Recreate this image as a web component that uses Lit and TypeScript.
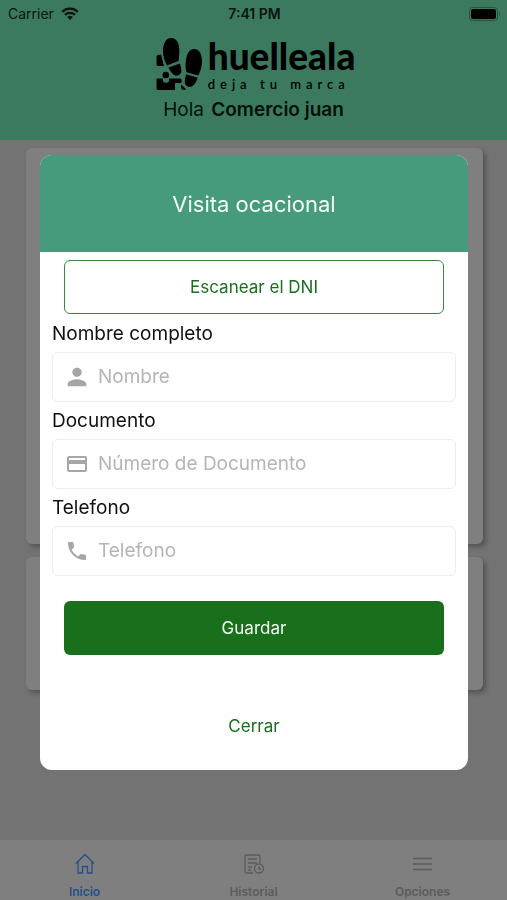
import { LitElement, html, css, svg } from "lit";
import { customElement, state } from "lit/decorators.js";

const personIcon = svg`<path d="M12 12c2.21 0 4-1.79 4-4s-1.79-4-4-4-4 1.790-4 4 1.790 4 4 4zm0 2c-2.670 0-8 1.340-8 4v2h16v-2c0-2.660-5.330-4-8-4z"/>`;
const cardIcon = svg`<path d="M20 4H4c-1.110 0-1.990.890-1.990 2L2 18c0 1.110.890 2 2 2h16c1.110 0 2-.890 2-2V6c0-1.110-.890-2-2-2zm0 14H4v-6h16v6zm0-10H4V6h16v2z"/>`;
const phoneIcon = svg`<path d="M6.620 10.790c1.440 2.830 3.760 5.140 6.590 6.590l2.200-2.200c.270-.270.670-.360 1.020-.240 1.120.370 2.330.570 3.570.570.550 0 1 .450 1 1V20c0 .550-.450 1-1 1-9.390 0-17-7.610-17-17 0-.550.450-1 1-1h3.500c.550 0 1 .450 1 1 0 1.250.200 2.450.570 3.570.110.350.030.740-.250 1.020l-2.200 2.200z"/>`;

const fields = [
  { id: "nombre", label: "Nombre completo", hint: "Nombre", type: "text", size: 28, icon: personIcon },
  { id: "documento", label: "Documento", hint: "Número de Documento", type: "text", size: 24, icon: cardIcon },
  { id: "telefono", label: "Telefono", hint: "Telefono", type: "tel", size: 24, icon: phoneIcon },
];

const tabs = [
  {
    id: "inicio",
    label: "Inicio",
    icon: svg`<path d="M2 10.500 11 1.500l9 9M4 9v11h4.500v-6.500h5V20H18V9"/>`,
  },
  {
    id: "historial",
    label: "Historial",
    icon: svg`<path d="M10 20H3.500A1.500 1.500 0 0 1 2 18.500v-15A1.500 1.500 0 0 1 3.500 2h12A1.500 1.500 0 0 1 17 3.500V10M5 6h9M5 10h9M5 14h4M5 17h3"/><circle cx="16" cy="15.500" r="4.500"/><path d="M16 13v3h2"/>`,
  },
  { id: "opciones", label: "Opciones", icon: svg`<path d="M1 5.500h19M1 11h19M1 16.500h19"/>` },
];

@customElement("app-field")
class AppField extends LitElement {
  static properties = { field: { attribute: false } };
  declare field: (typeof fields)[number];

  static styles = css`
    :host { display: block; }
    .label { display: block; color: #111; font-size: 19px; line-height: 28px; }
    .box {
      display: flex;
      align-items: center;
      gap: 9px;
      height: 48px;
      margin: 4px 0;
      padding: 0 12px;
      border: 1px solid #ececec;
      border-radius: 6px;
    }
    .slot { display: flex; flex: none; justify-content: center; width: 24px; }
    .icon { flex: none; fill: #a6a6a6; }
    .input {
      flex: 1;
      min-width: 0;
      padding: 0;
      border: 0;
      outline: 0;
      background: transparent;
      color: #111;
      font: inherit;
      font-size: 19px;
      line-height: 28px;
    }
    .input::placeholder { color: #b5b5b5; opacity: 1; }
  `;

  render() {
    const f = this.field;
    return html`
      <label class="label" for=${f.id}>${f.label}</label>
      <div class="box">
        <span class="slot">
          <svg class="icon" width=${f.size} height=${f.size} viewBox="0 0 24 24" aria-hidden="true">${f.icon}</svg>
        </span>
        <input class="input" id=${f.id} type=${f.type} placeholder=${f.hint} />
      </div>
    `;
  }
}

@customElement("app-root")
class AppRoot extends LitElement {
  @state() private tab = "inicio";

  static styles = css`
    :host {
      display: flex;
      flex-direction: column;
      min-height: 100vh;
      background: #737373;
      font-family: Inter, "Liberation Sans", sans-serif;
    }
    .header { height: 140px; background: #3c7a60; color: #000; }
    .status {
      display: grid;
      grid-template-columns: 1fr auto 1fr;
      align-items: center;
      height: 27px;
      padding: 0 6px 0 8px;
      color: #06150f;
      font-size: 14px;
    }
    .carrier { display: flex; align-items: center; gap: 7px; }
    .time { font-weight: 600; }
    .battery { justify-self: end; }
    .logo { display: flex; justify-content: center; gap: 4px; padding: 10px 0 3px 4px; }
    .words { display: flex; flex-direction: column; }
    .name { font-family: Lato, sans-serif; font-size: 37px; font-weight: 900; line-height: 38px; }
    .tag { font-family: Lato, sans-serif; font-size: 13px; font-weight: 600; line-height: 18px; letter-spacing: 5px; }
    .hello { margin: 0; color: #03100a; font-size: 19px; font-weight: 400; line-height: 28px; text-align: center; }
    .who { margin-left: 2px; font-weight: 600; }
    .cards { display: flex; flex: 1; flex-direction: column; gap: 13px; padding: 8px 24px 24px 26px; }
    .card { height: 133px; border-radius: 6px; background: #7f7f7f; box-shadow: 3px 3px 4px #555; }
    .tall { height: 396px; }
    .tabs { display: grid; grid-template-columns: repeat(3, 1fr); height: 60px; background: #7f7f7f; }
    .tab {
      display: flex;
      flex-direction: column;
      align-items: center;
      gap: 9px;
      padding: 13px 0 0;
      border: 0;
      background: none;
      color: #5c5c5c;
      font: inherit;
      font-size: 12px;
      font-weight: 600;
      line-height: 16px;
      overflow: hidden;
    }
    .tab.active { color: #21518c; }
    .glyph { fill: none; stroke: currentColor; stroke-width: 1.3; flex: none; }
    .overlay { position: fixed; inset: 0; padding: 155px 39px 24px 40px; overflow: auto; }
    .dialog { overflow: hidden; border-radius: 12px; background: #fff; }
    .title {
      margin: 0;
      padding: 33px 0 31px;
      background: #469b7a;
      color: #f4fffa;
      font-size: 22px;
      font-weight: 400;
      line-height: 33px;
      text-align: center;
    }
    .form { display: flex; flex-direction: column; padding: 8px 12px 17px; }
    .fields { display: flex; flex-direction: column; gap: 1px; padding: 6px 0 0; }
    .btn {
      height: 54px;
      margin: 0 12px;
      border: 1px solid transparent;
      border-radius: 6px;
      background: none;
      color: #196f1c;
      font: inherit;
      font-size: 17px;
    }
    .outline { border-color: #3c8740; }
    .solid { margin-top: 21px; background: #196f1c; color: #f1fff1; }
    .close { margin-top: 44px; }
  `;

  render() {
    return html`
      <header class="header">
        <div class="status">
          <span class="carrier">
            Carrier
            <svg width="18" height="13" viewBox="0 0 18 13" aria-hidden="true">
              <g fill="none" stroke="#06150f" stroke-width="2.300">
                <path d="M1.200 4.800a11.200 11.200 0 0 1 15.600 0" />
                <path d="M4 7.800a7.200 7.200 0 0 1 10 0" />
              </g>
              <path fill="#06150f" d="M6.200 10a4.200 4.200 0 0 1 5.600 0L9 12.900z" />
            </svg>
          </span>
          <span class="time">7:41 PM</span>
          <svg class="battery" width="32" height="14" viewBox="0 0 32 14" aria-hidden="true">
            <rect x=".500" y=".500" width="28" height="13" rx="3" fill="none" stroke="#235440" />
            <rect x="2" y="2" width="25" height="10" rx="2" />
            <path fill="#235440" d="M30 4.500q2 2.500 0 5z" />
          </svg>
        </div>
        <div class="logo">
          <svg width="48" height="56" viewBox="0 0 48 56" aria-hidden="true">
            <path d="M15 1c6 0 8.500 6 8.300 13-.1 5-.5 7.500-.8 10L11 28.500C8.500 24 6.800 19 7 13.500 7.200 6 10 1 15 1z" />
            <path d="M12.500 30.500L24 26.500c1.500 5 2.500 10.700-2 11.900-4 1-7.500-3-9.500-7.900z" />
            <path d="M38 12c5.500 0 8.500 6 8 13.500-.3 5.500-2 9.500-3.700 13L30.500 35.300c-1-3.300-1.200-6.800-.7-10.800C30.700 17 33 12 38 12z" />
            <path d="M30.300 37.300l11.400 3.500c-1.500 5-5 10.200-9.500 9-4.700-1.300-3.700-8-1.900-12.500z" />
            <path d="M2 18l3-.5L8 29H2q-1.500 0-1.500-1.500v-8Q.5 18 2 18z" />
            <circle cx="9.800" cy="38" r="3.300" />
            <path d="M.5 41.500h6.500v3q3 2.500 6 0v-3h11q2 0 1.500 2.500v2h-6.500v7H2q-1.500 0-1.500-1.500zM25 47.500l4.500 4q.5 1.500-1 1.500-3.500 0-3.500-3z" />
          </svg>
          <div class="words">
            <span class="name">huelleala</span>
            <span class="tag">deja tu marca</span>
          </div>
        </div>
        <p class="hello">Hola <span class="who">Comercio juan</span></p>
      </header>
      <main class="cards">
        <div class="card tall"></div>
        <div class="card"></div>
      </main>
      <nav class="tabs">
        ${tabs.map(
          (t) => html`
            <button class="tab ${t.id === this.tab ? "active" : ""}" type="button" @click=${() => (this.tab = t.id)}>
              <svg class="glyph" width="22" height="22" viewBox="0 0 22 22" aria-hidden="true">${t.icon}</svg>
              ${t.label}
            </button>
          `
        )}
      </nav>
      <div class="overlay">
        <section class="dialog" role="dialog" aria-labelledby="title">
          <h1 class="title" id="title">Visita ocacional</h1>
          <form class="form" @submit=${(e: Event) => e.preventDefault()}>
            <button class="btn outline" type="button">Escanear el DNI</button>
            <div class="fields">${fields.map((f) => html`<app-field .field=${f}></app-field>`)}</div>
            <button class="btn solid" type="submit">Guardar</button>
            <button class="btn close" type="button">Cerrar</button>
          </form>
        </section>
      </div>
    `;
  }
}
